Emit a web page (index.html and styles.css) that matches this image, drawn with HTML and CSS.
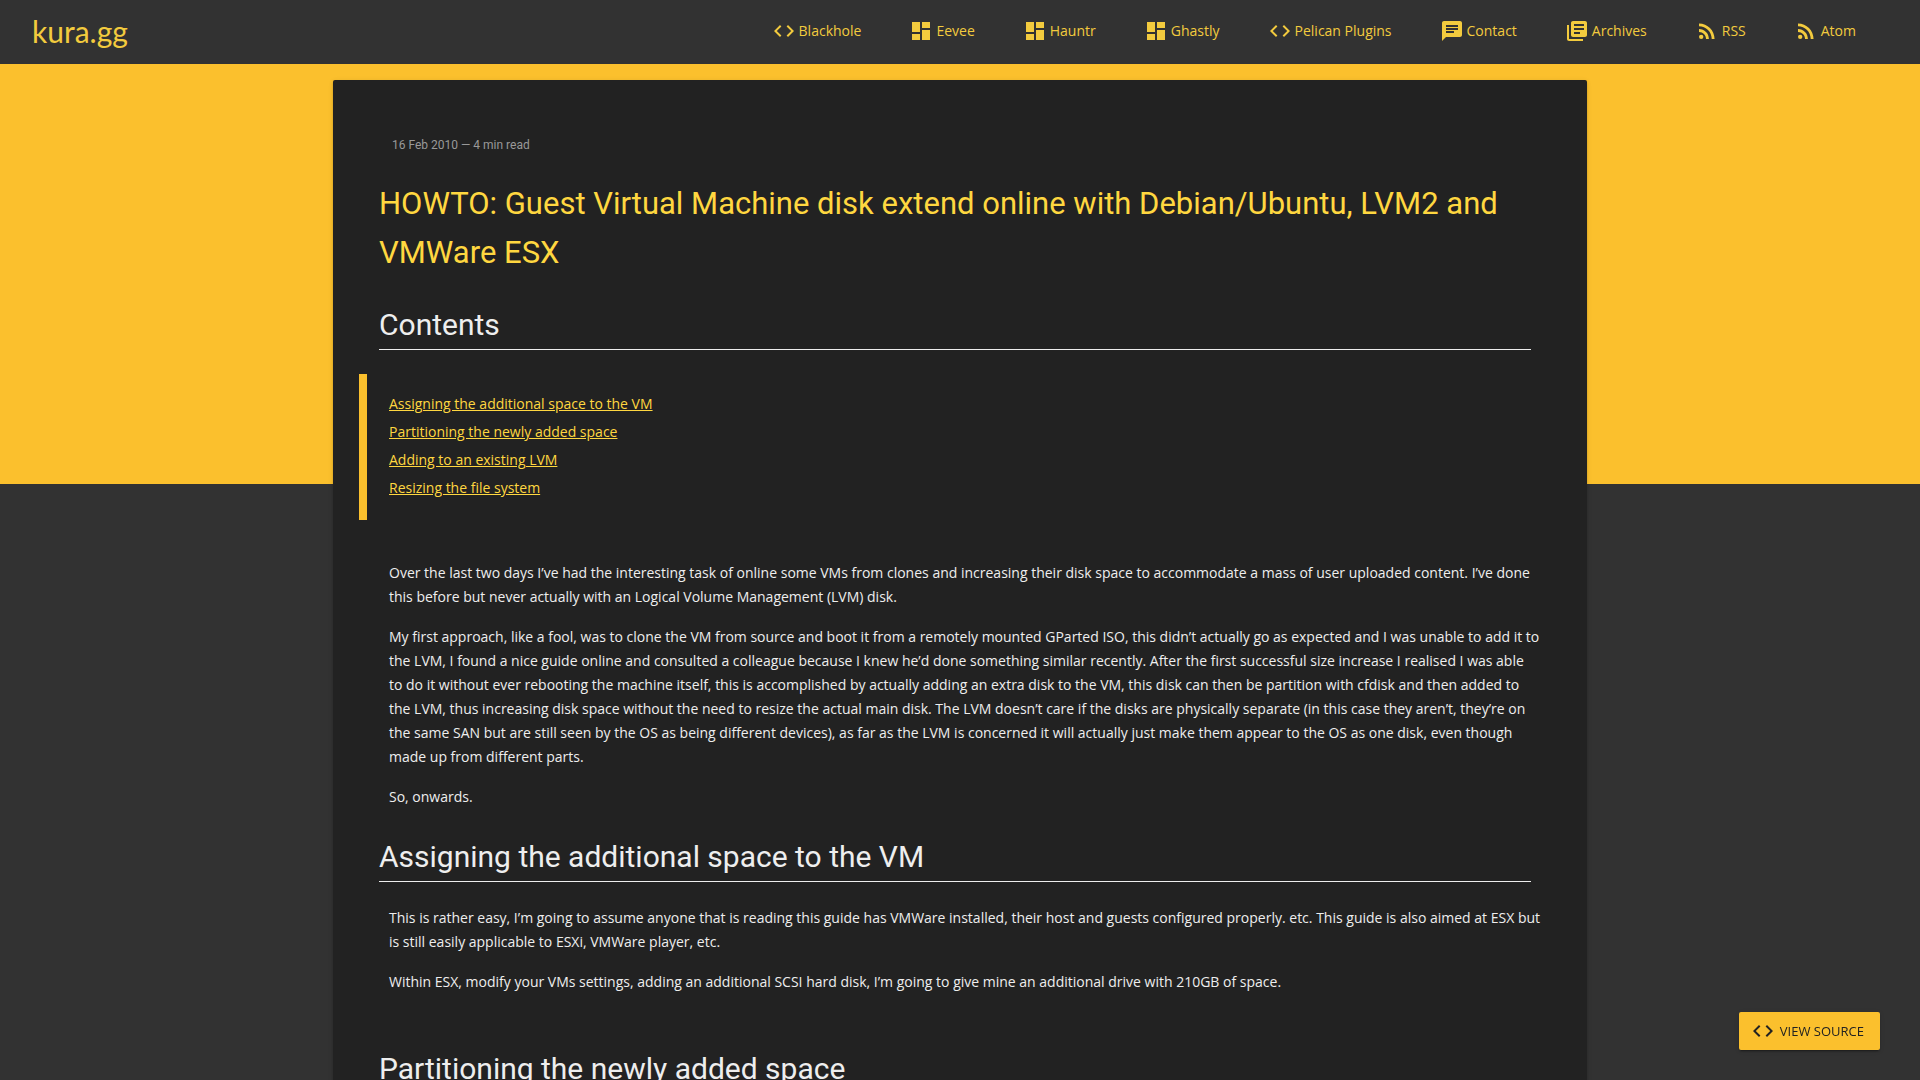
FILE: index.html
```html
<!DOCTYPE html>
<html lang="en">
<head>
    <meta charset="UTF-8">
    <meta name="viewport" content="width=device-width, initial-scale=1.0">
    <title>HOWTO: Guest Virtual Machine disk extend online with Debian/Ubuntu, LVM2 and VMWare ESX</title>
    <link rel="stylesheet" href="styles.css">
</head>
<body>
    <svg class="sprite" aria-hidden="true">
        <symbol id="code" viewBox="0 0 24 24"><path d="M9.4 16.6L4.8 12l4.6-4.6L8 6l-6 6 6 6 1.4-1.4zm5.2 0l4.6-4.6-4.6-4.6L16 6l6 6-6 6-1.4-1.4z"/></symbol>
        <symbol id="dashboard" viewBox="0 0 24 24"><path d="M3 13h8V3H3v10zm0 8h8v-6H3v6zm10 0h8V11h-8v10zm0-18v6h8V3h-8z"/></symbol>
        <symbol id="chat" viewBox="0 0 24 24"><path d="M20 2H4c-1.1 0-1.99.9-1.99 2L2 22l4-4h14c1.1 0 2-.9 2-2V4c0-1.1-.9-2-2-2zM6 9h12v2H6V9zm8 5H6v-2h8v2zm4-6H6V6h12v2z"/></symbol>
        <symbol id="books" viewBox="0 0 24 24"><path d="M4 6H2v14c0 1.1.9 2 2 2h14v-2H4V6zm16-4H8c-1.1 0-2 .9-2 2v12c0 1.1.9 2 2 2h12c1.1 0 2-.9 2-2V4c0-1.1-.9-2-2-2zm-1 9H9V9h10v2zm-4 4H9v-2h6v2zm4-8H9V5h10v2z"/></symbol>
        <symbol id="rss" viewBox="0 0 24 24"><circle cx="6.18" cy="17.82" r="2.18"/><path d="M4 4.44v2.83c7.03 0 12.73 5.7 12.73 12.73h2.83c0-8.59-6.97-15.56-15.56-15.56zm0 5.66v2.83c3.9 0 7.07 3.17 7.07 7.07h2.83c0-5.47-4.43-9.9-9.9-9.9z"/></symbol>
    </svg>

    <div class="layout">
        <header class="header">
            <a class="logo" href="#">kura.gg</a>
            <nav class="nav">
                <a href="#"><svg class="icon"><use href="#code"/></svg>Blackhole</a>
                <a href="#"><svg class="icon"><use href="#dashboard"/></svg>Eevee</a>
                <a href="#"><svg class="icon"><use href="#dashboard"/></svg>Hauntr</a>
                <a href="#"><svg class="icon"><use href="#dashboard"/></svg>Ghastly</a>
                <a href="#"><svg class="icon"><use href="#code"/></svg>Pelican Plugins</a>
                <a href="#"><svg class="icon"><use href="#chat"/></svg>Contact</a>
                <a href="#"><svg class="icon"><use href="#books"/></svg>Archives</a>
                <a href="#"><svg class="icon"><use href="#rss"/></svg>RSS</a>
                <a href="#"><svg class="icon"><use href="#rss"/></svg>Atom</a>
            </nav>
        </header>
        <div class="ribbon"></div>
        <main class="main">
            <article class="card">
                <div class="meta">16 Feb 2010 — 4 min read</div>
                <h1>HOWTO: Guest Virtual Machine disk extend online with Debian/Ubuntu, LVM2 and VMWare ESX</h1>

                <h2>Contents</h2>
                <ul class="toc">
                    <li><a href="#assigning">Assigning the additional space to the VM</a></li>
                    <li><a href="#partitioning">Partitioning the newly added space</a></li>
                    <li><a href="#adding">Adding to an existing LVM</a></li>
                    <li><a href="#resizing">Resizing the file system</a></li>
                </ul>

                <p>Over the last two days I’ve had the interesting task of online some VMs from clones and increasing their disk space to accommodate a mass of user uploaded content. I’ve done this before but never actually with an Logical Volume Management (LVM) disk.</p>
                <p>My first approach, like a fool, was to clone the VM from source and boot it from a remotely mounted GParted ISO, this didn’t actually go as expected and I was unable to add it to the LVM, I found a nice guide online and consulted a colleague because I knew he’d done something similar recently. After the first successful size increase I realised I was able to&nbsp;do it without ever rebooting the machine itself, this is accomplished by actually adding an extra disk to the VM, this disk can then be partition with cfdisk and then added to the LVM, thus increasing disk space without the need to resize the actual main disk. The LVM doesn’t care if the disks are physically separate (in this case they aren’t, they’re on the same SAN but are still seen by the OS as being different devices), as far as the LVM is concerned it will actually just make them appear to the OS as one disk, even though made up from different parts.</p>
                <p>So, onwards.</p>

                <section id="assigning">
                    <h2>Assigning the additional space to the VM</h2>
                    <p>This is rather easy, I’m going to assume anyone that is reading this guide has VMWare installed, their host and guests configured properly. etc. This guide is also aimed at ESX but is still easily applicable to ESXi, VMWare player, etc.</p>
                    <p>Within ESX, modify your VMs settings, adding an additional SCSI hard disk, I’m going to give mine an additional drive with 210GB of space.</p>
                </section>

                <section id="partitioning">
                    <h2>Partitioning the newly added space</h2>
                </section>
            </article>
        </main>
    </div>

    <a class="view-source" href="#"><svg class="icon"><use href="#code"/></svg>VIEW SOURCE</a>
</body>
</html>
```
FILE: styles.css
```css
* {
    box-sizing: border-box;
}
body {
    margin: 0;
    background-color: #323232;
    color: #eee;
    font-family: "Open Sans", "Noto Sans", sans-serif;
    font-size: 14px;
    line-height: 24px;
}
a {
    color: #ffd740;
}
.sprite {
    display: none;
}
.icon {
    width: 24px;
    height: 24px;
    fill: currentColor;
    flex-shrink: 0;
}

/* header */
.layout {
    height: 100vh;
    overflow-y: auto;
    scrollbar-width: none;
}
.header {
    display: flex;
    align-items: center;
    justify-content: space-between;
    height: 64px;
    padding: 0 40px 2px 32px;
    background-color: #323232;
}
.header a {
    color: #f3cb3e;
    text-decoration: none;
}
.logo {
    font-family: Lato, sans-serif;
    font-size: 30px;
}
.nav {
    display: flex;
}
.nav a {
    display: flex;
    align-items: center;
    gap: 3px;
    padding: 0 24px;
}

/* article */
.ribbon {
    height: 420px;
    background-color: #fbc02d;
}
.main {
    margin-top: -404px;
    padding: 0 333px;
}
.card {
    padding: 53px 56px 80px 46px;
    background-color: #222;
    border-radius: 2px;
    box-shadow: 0 2px 2px 0 rgba(0, 0, 0, 0.14), 0 3px 1px -2px rgba(0, 0, 0, 0.2), 0 1px 5px 0 rgba(0, 0, 0, 0.12);
}
.meta {
    padding-left: 13px;
    color: #999;
    font-family: Roboto, sans-serif;
    font-size: 12px;
}
h1, h2 {
    font-family: Roboto, sans-serif;
    font-weight: 400;
}
h1 {
    margin: 22px 0;
    color: #ffd740;
    font-size: 31px;
    line-height: 49px;
}
h2 {
    margin: 24px 0;
    border-bottom: 1px solid #eee;
    font-size: 30px;
    line-height: 48px;
}
p {
    margin: 0 -10px 16px 10px;
}
section {
    padding-bottom: 11px;
}
.toc {
    margin: 24px 0 41px -20px;
    padding: 16px 0 18px 22px;
    border-left: 8px solid #fbc02d;
    list-style: none;
    line-height: 28px;
}

.view-source {
    position: fixed;
    right: 40px;
    bottom: 30px;
    display: flex;
    align-items: center;
    gap: 5px;
    height: 38px;
    padding: 0 16px 0 12px;
    background-color: #fbc02d;
    border-radius: 2px;
    box-shadow: 0 2px 2px 0 rgba(0, 0, 0, 0.14), 0 3px 1px -2px rgba(0, 0, 0, 0.2), 0 1px 5px 0 rgba(0, 0, 0, 0.12);
    color: #222;
    font-size: 13px;
    text-decoration: none;
}
```
